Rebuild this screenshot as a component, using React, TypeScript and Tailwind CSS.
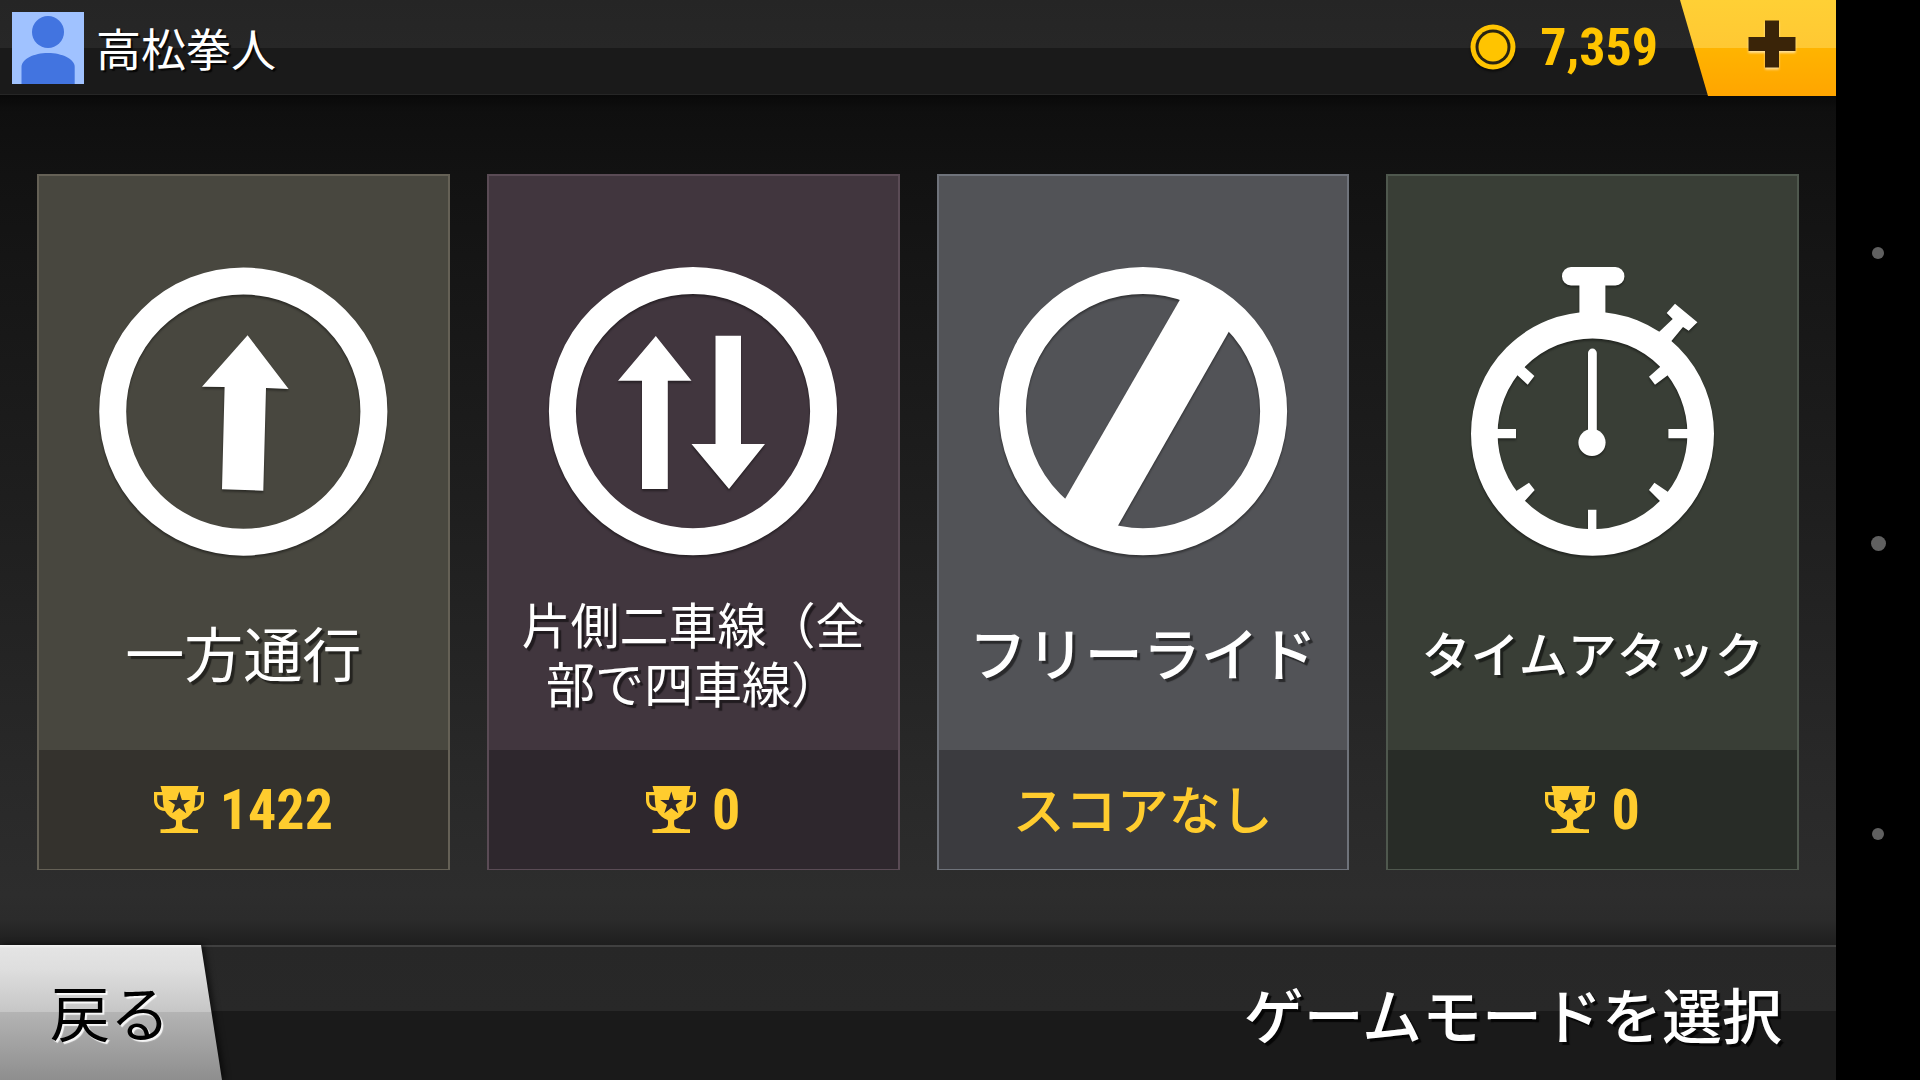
import type { ReactNode } from 'react'

type Mode = {
  id: string
  title: string
  titleSize: string
  score: string | null
  card: string
  footer: string
  icon: ReactNode
}

const MODES: Mode[] = [
  {
    id: 'one-way',
    title: '一方通行',
    titleSize: 'text-[59px]',
    score: '1422',
    card: 'bg-[#48473f] border-[#656156]',
    footer: 'bg-[#34322d]',
    icon: (
      <>
        <circle cx="145.3" cy="144.6" r="130.6" fill="none" stroke="white" strokeWidth="27" />
        <path d="M149.6 68.3 190.6 122 168 121 165.3 223.7 124 222.3 126.6 120 104 119.7Z" />
      </>
    ),
  },
  {
    id: 'two-way',
    title: '片側二車線（全部で四車線）',
    titleSize: 'text-[49px]',
    score: '0',
    card: 'bg-[#41363e] border-[#5a4b55]',
    footer: 'bg-[#2e272d]',
    icon: (
      <>
        <circle cx="145" cy="144.2" r="130.6" fill="none" stroke="white" strokeWidth="27" />
        <path d="M107.8 69 143.5 113.7H119.8V222H94V113.7H70Z" />
        <path d="M167.5 68.7H193V177H217L181 222 143.5 177H167.5Z" />
      </>
    ),
  },
  {
    id: 'free-ride',
    title: 'フリーライド',
    titleSize: 'text-[58px] font-medium',
    score: null,
    card: 'bg-[#525357] border-[#6f737b]',
    footer: 'bg-[#3b3b3f]',
    icon: (
      <>
        <circle cx="145" cy="144.2" r="130.6" fill="none" stroke="white" strokeWidth="27" />
        <path d="M187.8 22.6 236.8 54.3 113.8 269.4 61.4 241.7Z" />
      </>
    ),
  },
  {
    id: 'time-attack',
    title: 'タイムアタック',
    titleSize: 'text-[49px] font-medium',
    score: '0',
    card: 'bg-[#393e36] border-[#4f584e]',
    footer: 'bg-[#282c27]',
    icon: (
      <>
        <ellipse cx="144.5" cy="166.8" rx="108.2" ry="108.7" fill="none" stroke="white" strokeWidth="26.6" />
        <rect x="114" y="0" width="62.4" height="18.5" rx="9" />
        <rect x="131.4" y="14" width="26" height="38" />
        <path d="M211 65 224.7 52 218.7 46 227 36.7 249.4 55.3 240.7 63.7 235 60 223.4 74 212 84Z" />
        {/* dial ticks */}
        <path d="M40 162H68V171.3H40ZM220.4 162H249V171.3H220.4ZM140 242.7H148.4V270H140Z" />
        <path d="M86.4 109 79.7 117.7 69.4 108.3 62 94 76.7 100.3ZM201 109.7 207 117.7 219.7 108.3 227 94 211.7 100.3Z" />
        <path d="M81 215.7 86.7 223 77 233.7 62 240 68.7 223.7ZM206.4 215.7 201 223 211.7 233.7 227 240 219.7 224.7Z" />
        <path d="M144.4 86V170" stroke="white" strokeWidth="8.8" strokeLinecap="round" />
        <circle cx="144" cy="175.5" r="13.6" />
      </>
    ),
  },
]

function Trophy() {
  return (
    <svg viewBox="0 0 50 47" className="h-[47px] w-[50px]" fill="#ffcc2e" aria-hidden="true">
      <path d="M6.5 0H44.5L43 6H50V14C50 20 46 24.500 39 25C36.500 29.500 33 32 28.300 34C28 36.500 27.800 39 29 41C32 43 38 43.300 44 43.300V47H6.500V43.300C12 43.300 18 43 21 41C22.300 39 22.300 36.500 21.700 34C17 32 13.500 29.500 11 25C4 24.500 0 20 0 14V6H8ZM3.200 9.300V14C3.200 18 5.500 21 9.800 21.700C9 18 8.800 14 8.700 9.300ZM46.800 9.300H41.300C41.200 14 41 18 40.200 21.700C44.500 21 46.800 18 46.800 14ZM25.300 5.500 22.700 14H14.200L21 18.700 18.300 27.200 25.300 22 32.300 27.200 29.600 18.700 36.400 14H27.900Z" fillRule="evenodd" />
    </svg>
  )
}

function Coin() {
  return (
    <svg viewBox="0 0 46 46" className="size-[46px] drop-shadow-[0_2px_1px_rgba(0,0,0,0.6)]" aria-hidden="true">
      <circle cx="23" cy="23" r="22.500" fill="#ffc400" />
      <circle cx="23" cy="23" r="17.500" fill="#292312" />
      <circle cx="23" cy="23" r="14.500" fill="#ffc400" />
    </svg>
  )
}

function ModeCard({ mode }: { mode: Mode }) {
  return (
    <button type="button" className={`flex min-w-0 flex-1 flex-col border-2 border-b ${mode.card}`}>
      <span className="flex w-full flex-1 flex-col items-center pt-[91px]">
        <svg
          viewBox="0 0 290 290"
          className="size-[290px] overflow-visible drop-shadow-[0_2px_1px_rgba(0,0,0,0.4)]"
          fill="white"
          aria-hidden="true"
        >
          {mode.icon}
        </svg>
        <span
          className={`flex flex-1 items-center px-6 pb-1 text-center leading-[59px] break-all text-white text-shadow-[3px_3px_1px_rgba(0,0,0,0.5)] ${mode.titleSize}`}
        >
          {mode.title}
        </span>
      </span>
      <span className={`flex h-[119px] w-full items-center justify-center gap-4 text-[#ffcc2e] ${mode.footer}`}>
        {mode.score === null ? (
          <span className="pb-1 text-[52px] leading-[60px] font-medium">スコアなし</span>
        ) : (
          <>
            <Trophy />
            <span className="font-['Roboto_Condensed','Liberation_Sans_Narrow',Roboto,sans-serif] text-[56px] leading-[60px] font-bold">
              {mode.score}
            </span>
          </>
        )}
      </span>
    </button>
  )
}

export default function App() {
  return (
    <div className="flex min-h-screen bg-black font-['Noto_Sans_CJK_JP',sans-serif]">
      <div className="flex min-w-0 flex-1 flex-col">
        <header className="-mb-px flex h-24 items-stretch border-b-2 border-[#262626] bg-[linear-gradient(#252525_0,#272727_48px,#1a1a1a_48px,#1a1a1a_100%)]">
          <div className="flex flex-1 items-center gap-3 pt-0.5 pl-3">
            <svg viewBox="0 0 72 72" className="size-[72px]" aria-hidden="true">
              <rect width="72" height="72" fill="#a0c2ff" />
              <circle cx="36" cy="20" r="16" fill="#4274e0" />
              <path d="M9.500 72V55C9.500 47 22 41 36 41S62.700 47 62.700 55V72Z" fill="#4274e0" />
            </svg>
            <span className="text-[45px] leading-[60px] text-white text-shadow-[2px_2px_1px_rgba(0,0,0,0.8)]">高松拳人</span>
          </div>
          <div className="flex items-center gap-6 pr-[22px] text-[#ffc400]">
            <Coin />
            <span className="pt-0.5 font-['Roboto_Condensed','Liberation_Sans_Narrow',Roboto,sans-serif] text-[52px] leading-[60px] font-bold">
              7,359
            </span>
          </div>
          <button
            type="button"
            aria-label="コインを追加"
            className="-mb-0.5 flex w-[156px] items-center justify-end bg-[linear-gradient(#ffd035_0,#ffc833_48px,#ffb400_48px,#ffa500_100%)] pr-10 pb-2 [clip-path:polygon(0_0,100%_0,100%_100%,28px_100%)]"
          >
            <svg viewBox="0 0 48 48" className="size-12 drop-shadow-[0_2px_1px_rgba(255,255,255,0.6)]" fill="#3a2408" aria-hidden="true">
              <path d="M17 .500H31V17H47.500V31H31V47.500H17V31H.500V17H17Z" />
            </svg>
          </button>
        </header>

        <main className="flex flex-1 gap-[37px] bg-[linear-gradient(#090909_0,#0f0f0f_16px,#121212_80px,#2d2d2d_800px,#2b2b2b_824px,#1e1e1e_100%)] px-[37px] pt-[79px] pb-[75px]">
          {MODES.map(mode => (
            <ModeCard key={mode.id} mode={mode} />
          ))}
        </main>

        <footer className="flex h-[135px] items-stretch justify-between border-t-2 border-[#404040] bg-[linear-gradient(#272727_0,#282828_64px,#1a1a1a_64px,#1a1a1a_100%)]">
          <div className="-mt-0.5 drop-shadow-[3px_0_3px_rgba(0,0,0,0.6)]">
            <button
              type="button"
              className="h-full w-[222px] bg-[linear-gradient(#f4f4f4_0,#e4e4e4_3px,#dedede_24px,#c6c6c6_67px,#b4b4b4_67px,#8e8e8e_100%)] pr-0.5 pb-1 text-[60px] leading-[60px] text-black text-shadow-[2px_2px_1px_rgba(255,255,255,0.9)] [clip-path:polygon(0_0,201px_0,100%_100%,0_100%)]"
            >
              戻る
            </button>
          </div>
          <h1 className="self-center pr-[54px] pb-0.5 text-[60px] leading-[72px] font-medium text-white text-shadow-[3px_3px_1px_rgba(0,0,0,0.8)]">
            ゲームモードを選択
          </h1>
        </footer>
      </div>

      {/* System navigation strip */}
      <aside className="flex w-[84px] flex-col items-center justify-around bg-black pt-[108px] pb-[102px]">
        <span className="size-3 rounded-full bg-[#606060]" />
        <span className="size-[15px] rounded-full bg-[#606060]" />
        <span className="size-3 rounded-full bg-[#606060]" />
      </aside>
    </div>
  )
}
